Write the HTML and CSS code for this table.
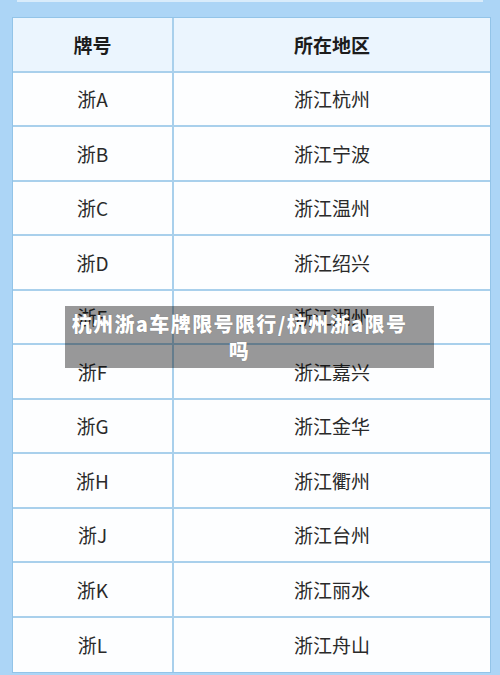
FILE: index.html
```html
<!DOCTYPE html>
<html lang="zh">
<head>
<meta charset="utf-8">
<link rel="stylesheet" href="styles.css">
</head>
<body>
<div class="page">
  <div class="topstrip"></div>
  <div class="sheet">
    <div class="cell head">牌号</div><div class="cell head right">所在地区</div>
    <div class="cell">浙A</div><div class="cell right">浙江杭州</div>
    <div class="cell">浙B</div><div class="cell right">浙江宁波</div>
    <div class="cell">浙C</div><div class="cell right">浙江温州</div>
    <div class="cell">浙D</div><div class="cell right">浙江绍兴</div>
    <div class="cell">浙E</div><div class="cell right">浙江湖州</div>
    <div class="cell">浙F</div><div class="cell right">浙江嘉兴</div>
    <div class="cell">浙G</div><div class="cell right">浙江金华</div>
    <div class="cell">浙H</div><div class="cell right">浙江衢州</div>
    <div class="cell">浙J</div><div class="cell right">浙江台州</div>
    <div class="cell">浙K</div><div class="cell right">浙江丽水</div>
    <div class="cell last">浙L</div><div class="cell right last">浙江舟山</div>
  </div>
  <div class="caption">杭州浙a车牌限号限行/杭州浙a限号<br>吗</div>
</div>
</body>
</html>
```
FILE: styles.css
```css
html, body {
  margin: 0;
  padding: 0;
}
body {
  background: #acd5f6;
  font-family: "Noto Sans CJK SC", "Noto Sans", sans-serif;
}
.page {
  position: relative;
  width: 500px;
  height: 675px;
  overflow: hidden;
}
.topstrip {
  height: 2px;
  margin: 0 17px;
  background: #d9ecfb;
}
.sheet {
  margin: 15px 0 0 12px;
  width: 479px;
  height: 656px;
  box-sizing: border-box;
  border: 1px solid #93c4e8;
  display: grid;
  grid-template-columns: 161px 1fr;
  grid-template-rows: repeat(12, 1fr);
  background: #fdfeff;
}
.cell {
  display: flex;
  align-items: center;
  justify-content: center;
  font-size: 19px;
  color: #2a2a2a;
  border-bottom: 2px solid #a9d0ec;
  border-right: 2px solid #a9d0ec;
}
.cell.right {
  border-right: none;
}
.cell.last {
  border-bottom: none;
}
.cell.head {
  background: #ebf5fe;
  font-weight: 700;
  color: #1c1c1c;
}
.caption {
  position: absolute;
  left: 65px;
  top: 306px;
  width: 369px;
  height: 62px;
  box-sizing: border-box;
  padding: 4px 20px 0 0;
  background: rgba(0, 0, 0, 0.4);
  color: #fff;
  font-size: 20px;
  font-weight: 900;
  letter-spacing: 1.4px;
  line-height: 27px;
  text-align: center;
  text-shadow: 0 0 1px rgba(0, 0, 0, 0.3);
}
```
